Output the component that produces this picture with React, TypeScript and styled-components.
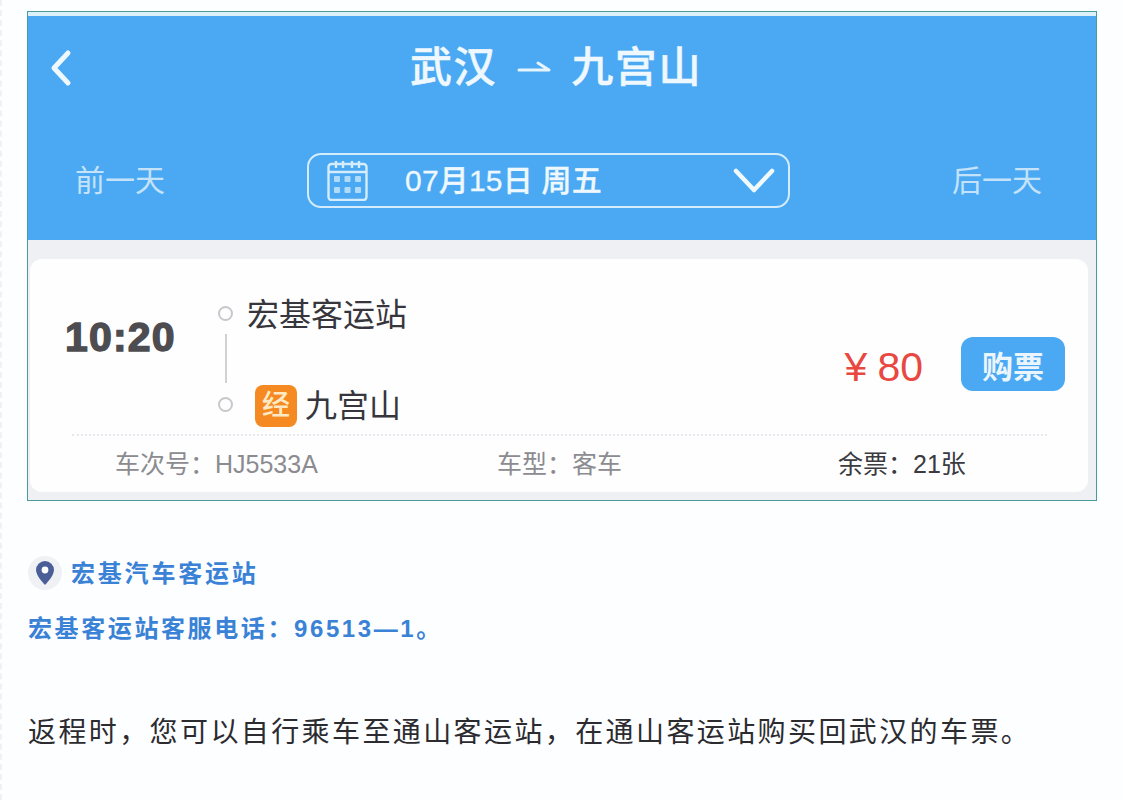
import React from "react";
import styled, { createGlobalStyle } from "styled-components";

const sans = `"Liberation Sans", "Noto Sans CJK SC", sans-serif`;
const blue = "#4aa9f2";

const GlobalStyle = createGlobalStyle`
  html, body {
    margin: 0;
    padding: 0;
    background: #fdfeff;
    font-family: ${sans};
  }
`;

const Page = styled.div`
  width: 1123px;
  height: 800px;
  box-sizing: border-box;
  border-left: 2px dashed #f1f1f5;
  padding: 11px 26px 0 25px;
  overflow: hidden;
`;

const Shot = styled.section`
  height: 490px;
  box-sizing: border-box;
  border: 1px solid #4b9a9c;
  background: #eef0f3;
  display: flex;
  flex-direction: column;
`;

const Header = styled.header`
  height: 228px;
  flex: none;
  box-sizing: border-box;
  background: ${blue};
  border-top: 4px solid #dff1f8;
  color: #eef8fe;
  display: flex;
  flex-direction: column;
`;

const TitleBar = styled.div`
  height: 104px;
  box-sizing: border-box;
  padding-left: 21px;
  display: flex;
  align-items: center;
`;

const Title = styled.h1`
  margin: 0 0 0 337px;
  font-size: 42px;
  line-height: 1;
  font-weight: 500;
  letter-spacing: 1.6px;
  -webkit-text-stroke: 0.5px #eef8fe;
  display: flex;
  align-items: center;
  gap: 20px;
`;

const DateRow = styled.div`
  margin-top: 33px;
  padding-left: 47px;
  display: flex;
  align-items: center;
`;

const DayLink = styled.span`
  font-size: 30px;
  line-height: 1;
  color: #c4e2fa;
`;

const DatePill = styled.div`
  width: 483px;
  height: 55px;
  margin: 0 162px 0 142px;
  box-sizing: border-box;
  border: 2.5px solid #d4ecfc;
  border-radius: 14px;
  padding: 0 13px 0 18px;
  display: flex;
  align-items: center;
`;

const DateText = styled.span`
  margin-left: 37px;
  flex: 1;
  font-size: 30px;
  line-height: 1;
  font-weight: 500;
  letter-spacing: 0.2px;
  -webkit-text-stroke: 0.3px #eef8fe;
`;

const Card = styled.div`
  margin: 19px 8px 8px 2px;
  flex: 1;
  background: #fefeff;
  border-radius: 12px;
  display: flex;
  flex-direction: column;
`;

const TripRow = styled.div`
  height: 177px;
  flex: none;
  box-sizing: border-box;
  margin: 0 41px 0 42px;
  border-bottom: 2px dotted #e6e9ed;
  display: flex;
  align-items: center;
`;

const Time = styled.div`
  width: 153px;
  margin-left: -7px;
  margin-top: -18px;
  font-size: 41px;
  line-height: 1;
  font-weight: 700;
  letter-spacing: 1.2px;
  color: #4d4d51;
  -webkit-text-stroke: 1.4px #4d4d51;
`;

const Route = styled.div`
  width: 220px;
  height: 100%;
  position: relative;
  flex: none;
  display: flex;
  flex-direction: column;
  justify-content: space-between;
  padding: 35px 0 7px;
  box-sizing: border-box;
`;

const Stop = styled.div`
  height: 42px;
  display: flex;
  align-items: center;
  gap: 8px;
  font-size: 32px;
  line-height: 1;
  color: #36363c;
`;

const Dot = styled.span<{ $gap: number }>`
  width: 15px;
  height: 15px;
  flex: none;
  box-sizing: border-box;
  border: 2px solid #c6c8cc;
  border-radius: 50%;
  margin: -3px ${(p) => p.$gap}px 0 0;
`;

const Connector = styled.span`
  position: absolute;
  left: 7px;
  top: 75px;
  width: 2px;
  height: 49px;
  background: #cfd1d5;
`;

const ViaBadge = styled.span`
  width: 42px;
  height: 42px;
  border-radius: 8px;
  background: #f58a22;
  color: #ffe9c4;
  font-size: 28px;
  font-weight: 500;
  display: flex;
  align-items: center;
  justify-content: center;
`;

const Price = styled.div`
  margin-left: auto;
  margin-top: 42px;
  font-size: 41px;
  line-height: 1;
  color: #e8483f;
  display: flex;
  gap: 10px;
`;

const BuyButton = styled.div`
  margin-left: 38px;
  margin-right: -18px;
  margin-top: 35px;
  width: 104px;
  height: 54px;
  border-radius: 12px;
  background: ${blue};
  color: #eaf5fd;
  font-size: 31px;
  font-weight: 700;
  display: flex;
  align-items: center;
  justify-content: center;
`;

const InfoRow = styled.div`
  margin-top: 11px;
  padding-left: 85px;
  display: flex;
  font-size: 25px;
  line-height: 34px;
`;

const Info = styled.span<{ $width: number; $dark?: boolean }>`
  width: ${(p) => p.$width}px;
  flex: none;
  color: ${(p) => (p.$dark ? "#3a3a40" : "#8b8b90")};
`;

const Station = styled.div`
  margin-top: 54px;
  display: flex;
  align-items: center;
  gap: 9px;
`;

const PinCircle = styled.span`
  width: 34px;
  height: 34px;
  margin-left: 1px;
  border-radius: 50%;
  background: #eff1f5;
  display: flex;
  align-items: center;
  justify-content: center;
`;

const BlueText = styled.div`
  font-size: 24px;
  line-height: 34px;
  font-weight: 700;
  letter-spacing: 2.8px;
  color: #3a82d6;
`;

const StationName = styled(BlueText)`
  padding-top: 2px;
`;

const Phone = styled(BlueText)`
  margin-top: 21px;
  margin-left: 1px;
  letter-spacing: 2.6px;
`;

const Body = styled.p`
  margin: 68px 0 0 1px;
  font-size: 28px;
  line-height: 38px;
  letter-spacing: 2.4px;
  color: #2c2c30;
  white-space: nowrap;
`;

const BackIcon = () => (
  <svg width="24" height="38" viewBox="0 0 24 38" fill="none" stroke="#eef8fe" strokeWidth="5" strokeLinecap="round" strokeLinejoin="round">
    <path d="M19 4 5 19l14 15" />
  </svg>
);

const ArrowIcon = () => (
  <svg width="34" height="16" viewBox="0 0 34 16" fill="none" stroke="#e6f4fd" strokeWidth="3" strokeLinecap="round" strokeLinejoin="round">
    <path d="M2 10h30L21 3" />
  </svg>
);

const CalendarIcon = () => (
  <svg width="41" height="41" viewBox="0 0 41 41" fill="none" stroke="#d4ecfc" strokeWidth="2.4">
    <rect x="1.5" y="4" width="38" height="36" rx="3" />
    <path d="M1.5 12h38M9 1v7M16 1v7M25 1v7M32 1v7" />
    <g fill="#d4ecfc" stroke="none">
      <rect x="7" y="16" width="6" height="6" rx="1" opacity=".75" />
      <rect x="17.5" y="16" width="6" height="6" rx="1" opacity=".75" />
      <rect x="28" y="16" width="6" height="6" rx="1" opacity=".75" />
      <rect x="7" y="27" width="6" height="6" rx="1" opacity=".75" />
      <rect x="17.5" y="27" width="6" height="6" rx="1" opacity=".75" />
      <rect x="28" y="27" width="6" height="6" rx="1" opacity=".75" />
    </g>
  </svg>
);

const ChevronIcon = () => (
  <svg width="42" height="26" viewBox="0 0 42 26" fill="none" stroke="#f0f9fe" strokeWidth="4.5" strokeLinecap="round" strokeLinejoin="round">
    <path d="M3 3l18 19L39 3" />
  </svg>
);

const PinIcon = () => (
  <svg width="18" height="24" viewBox="0 0 18 24">
    <path d="M9 0a9 9 0 0 0-9 9c0 6 9 15 9 15s9-9 9-15a9 9 0 0 0-9-9z" fill="#4a5f97" />
    <circle cx="9" cy="9" r="3.4" fill="#fff" />
  </svg>
);

export default function App() {
  return (
    <>
      <GlobalStyle />
      <Page>
        <Shot>
          <Header>
            <TitleBar>
              <BackIcon />
              <Title>
                <span>武汉</span>
                <ArrowIcon />
                <span>九宫山</span>
              </Title>
            </TitleBar>
            <DateRow>
              <DayLink>前一天</DayLink>
              <DatePill>
                <CalendarIcon />
                <DateText>07月15日 周五</DateText>
                <ChevronIcon />
              </DatePill>
              <DayLink>后一天</DayLink>
            </DateRow>
          </Header>
          <Card>
            <TripRow>
              <Time>10:20</Time>
              <Route>
                <Connector />
                <Stop>
                  <Dot $gap={6} />
                  宏基客运站
                </Stop>
                <Stop>
                  <Dot $gap={14} />
                  <ViaBadge>经</ViaBadge>
                  九宫山
                </Stop>
              </Route>
              <Price>
                <span>¥</span>
                <span>80</span>
              </Price>
              <BuyButton>购票</BuyButton>
            </TripRow>
            <InfoRow>
              <Info $width={382}>车次号：HJ5533A</Info>
              <Info $width={341}>车型：客车</Info>
              <Info $width={130} $dark>余票：21张</Info>
            </InfoRow>
          </Card>
        </Shot>
        <Station>
          <PinCircle>
            <PinIcon />
          </PinCircle>
          <StationName>宏基汽车客运站</StationName>
        </Station>
        <Phone>宏基客运站客服电话：96513—1。</Phone>
        <Body>返程时，您可以自行乘车至通山客运站，在通山客运站购买回武汉的车票。</Body>
      </Page>
    </>
  );
}
